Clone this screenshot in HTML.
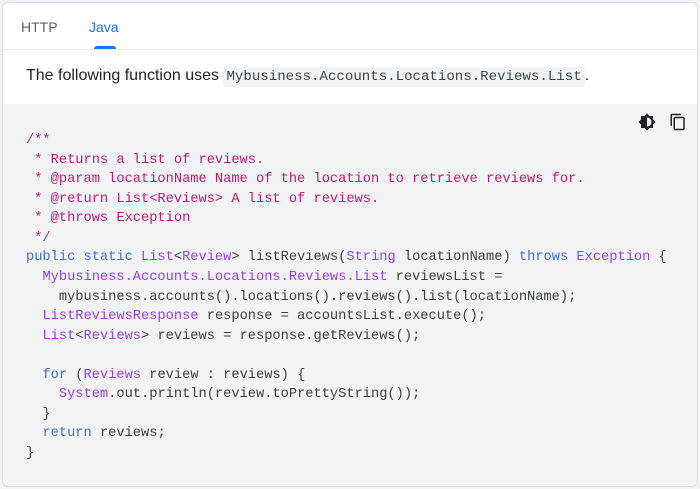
<!DOCTYPE html>
<html><head><style>
html,body{margin:0;padding:0;background:#f1f3f4;}
body{width:700px;height:489px;overflow:hidden;position:relative;font-family:"Liberation Sans",sans-serif;}
.card{position:absolute;left:2px;top:2px;width:694px;height:483px;background:#fff;border:1px solid #dadce0;border-radius:6px;overflow:hidden;}
.tabs{height:46px;border-bottom:1px solid #e8eaed;position:relative;}
.tab{position:absolute;top:16px;font-size:14px;color:#5f6368;}
.tab.a{color:#1a73e8;}
.ul{position:absolute;left:91px;top:43px;width:22px;height:3px;background:#1a73e8;border-radius:3px 3px 0 0;}
.desc{position:absolute;left:23px;top:64px;font-size:16px;color:#202124;}
.desc code{font-family:"Liberation Mono",monospace;font-size:14.1px;background:#f1f3f4;padding:2px 3px;border-radius:3px;color:#37474f;}
.code{position:absolute;left:0;top:101px;width:694px;height:382px;background:#f1f3f4;}
pre{margin:0;position:absolute;left:23px;top:27px;font-family:"Liberation Mono",monospace;font-size:13.7px;line-height:19.57px;color:#3c4043;}
.c{color:#c5187b}.k{color:#3f6fd8}.t{color:#9c3ee8}
.ic{position:absolute;top:9px;}
</style></head><body>
<div class="card">
<div class="tabs"><span class="tab" style="left:18px">HTTP</span><span class="tab a" style="left:86px">Java</span><div class="ul"></div></div>
<div class="desc">The following function uses <code>Mybusiness.Accounts.Locations.Reviews.List</code>.</div>
<div class="code">
<svg class="ic" style="left:635px" width="18" height="18" viewBox="0 0 24 24"><path fill="#202124" d="M20 8.69V4h-4.69L12 .69 8.69 4H4v4.69L.69 12 4 15.31V20h4.69L12 23.31 15.31 20H20v-4.69L23.31 12 20 8.69zM12 18V6c3.31 0 6 2.69 6 6s-2.69 6-6 6z"/></svg>
<svg class="ic" style="left:666px" width="18" height="18" viewBox="0 0 24 24"><path fill="#202124" d="M16 1H4c-1.1 0-2 .9-2 2v14h2V3h12V1zm3 4H8c-1.1 0-2 .9-2 2v14c0 1.1.9 2 2 2h11c1.1 0 2-.9 2-2V7c0-1.1-.9-2-2-2zm0 16H8V7h11v14z"/></svg>
<pre><span class="c">/**
 * Returns a list of reviews.
 * @param locationName Name of the location to retrieve reviews for.
 * @return List&lt;Reviews&gt; A list of reviews.
 * @throws Exception
 */</span>
<span class="k">public static</span> <span class="t">List</span>&lt;<span class="t">Review</span>&gt; listReviews(<span class="t">String</span> locationName) <span class="k">throws</span> <span class="t">Exception</span> {
  <span class="t">Mybusiness.Accounts.Locations.Reviews.List</span> reviewsList =
    mybusiness.accounts().locations().reviews().list(locationName);
  <span class="t">ListReviewsResponse</span> response = accountsList.execute();
  <span class="t">List</span>&lt;<span class="t">Reviews</span>&gt; reviews = response.getReviews();

  <span class="k">for</span> (<span class="t">Reviews</span> review : reviews) {
    <span class="t">System</span>.out.println(review.toPrettyString());
  }
  <span class="k">return</span> reviews;
}</pre>
</div>
</div>
</body></html>
